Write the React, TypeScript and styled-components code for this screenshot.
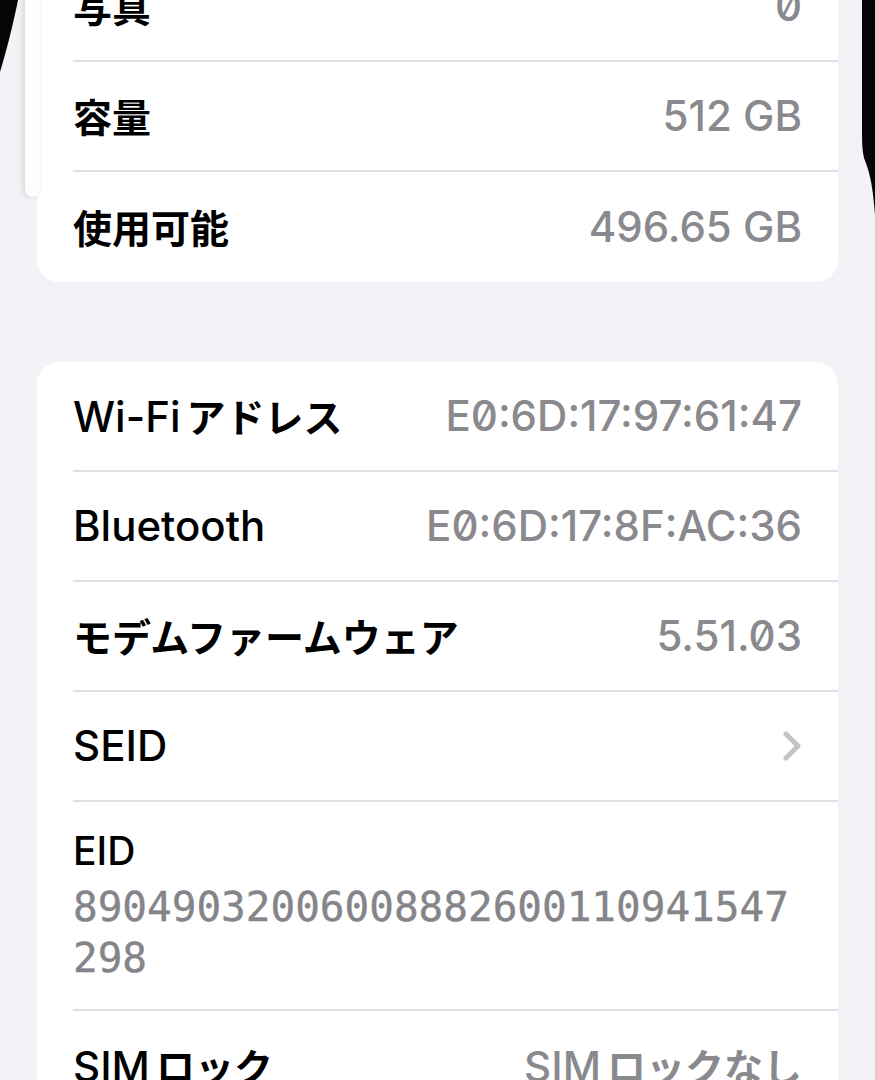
import React from "react";
import styled, { createGlobalStyle } from "styled-components";

const GlobalStyle = createGlobalStyle`
  html, body {
    margin: 0;
    padding: 0;
    background: #f2f2f7;
  }
  body {
    font-family: Inter, "Noto Sans CJK JP", sans-serif;
    -webkit-font-smoothing: antialiased;
    overflow: hidden;
  }
`;

type Item = { label: React.ReactNode; value?: React.ReactNode; chevron?: boolean };

const JaText = styled.span<{ $after?: boolean }>`
  font-family: "Noto Sans CJK JP", sans-serif;
  font-size: 39px;
  font-weight: 600;
  margin-left: ${(p) => (p.$after ? "6px" : "0")};
`;

const Ja = ({ children, after }: { children: React.ReactNode; after?: boolean }) => (
  <JaText $after={after}>{children}</JaText>
);

const storage: Item[] = [
  { label: <Ja>写真</Ja>, value: "0" },
  { label: <Ja>容量</Ja>, value: "512 GB" },
  { label: <Ja>使用可能</Ja>, value: "496.65 GB" },
];

const Screen = styled.div`
  position: relative;
  width: 876px;
  height: 1080px;
  overflow: hidden;
  box-sizing: border-box;
  background: #f2f2f7;
  border-right: 1px solid #cfcfd4;
`;

// scrolled content: the first row is partly above the top edge
const Content = styled.div`
  display: flex;
  flex-direction: column;
  gap: 80px;
  padding: 0 37px;
  margin-top: -48px;
`;

const Card = styled.div`
  background: #ffffff;
  border-radius: 22px;
  overflow: hidden;
`;

const Row = styled.div`
  padding-left: 36px;
  &:last-child > div {
    border-bottom: none;
  }
`;

const RowInner = styled.div`
  display: flex;
  align-items: center;
  justify-content: space-between;
  height: 110px;
  box-sizing: border-box;
  padding-right: 36px;
  border-bottom: 2px solid #e0e0e4;
`;

const StackedInner = styled(RowInner)`
  height: auto;
  flex-direction: column;
  align-items: flex-start;
  justify-content: flex-start;
  padding-top: 24px;
  padding-bottom: 25px;
`;

const Label = styled.div`
  font-size: 42px;
  font-weight: 500;
  line-height: 50px;
  color: #000000;
  white-space: nowrap;
`;

const SmallLabel = styled(Label)`
  font-size: 39px;
`;

const Value = styled.div`
  font-size: 42px;
  font-weight: 500;
  line-height: 50px;
  color: #8a8a8e;
  white-space: nowrap;
  font-feature-settings: "zero" 1;
`;

const MonoValue = styled.div`
  width: 100%;
  margin-top: 6px;
  font-family: "DejaVu Sans Mono", monospace;
  font-size: 41px;
  line-height: 51px;
  color: #858589;
  word-break: break-all;
  -webkit-text-stroke: 0.4px #858589;
`;

const Chevron = () => (
  <svg width="20" height="30" viewBox="0 0 20 30">
    <polyline points="4,3 16,15 4,27" fill="none" stroke="#c4c4c8" strokeWidth="5" strokeLinecap="round" strokeLinejoin="round" />
  </svg>
);

const ScrollIndicator = styled.div`
  position: absolute;
  left: 25px;
  top: -20px;
  width: 15px;
  height: 217px;
  border-radius: 8px;
  background: #fdfdfe;
  box-shadow: -2px 0 6px rgba(0, 0, 0, 0.12);
`;

const EdgeShade = styled.svg`
  position: absolute;
  top: 0;
  pointer-events: none;
`;

const InfoRow = ({ label, value, chevron }: Item) => (
  <Row>
    <RowInner>
      <Label>{label}</Label>
      {chevron ? <Chevron /> : <Value>{value}</Value>}
    </RowInner>
  </Row>
);

export default function App() {
  return (
    <>
      <GlobalStyle />
      <Screen>
        <Content>
          <Card>
            {storage.map((it, i) => (
              <InfoRow key={i} {...it} />
            ))}
          </Card>
          <Card>
            <InfoRow label={<>Wi-Fi<Ja after>アドレス</Ja></>} value="E0:6D:17:97:61:47" />
            <InfoRow label="Bluetooth" value="E0:6D:17:8F:AC:36" />
            <InfoRow label={<Ja>モデムファームウェア</Ja>} value="5.51.03" />
            <InfoRow label="SEID" chevron />
            <Row>
              <StackedInner>
                <SmallLabel>EID</SmallLabel>
                <MonoValue>89049032006008882600110941547298</MonoValue>
              </StackedInner>
            </Row>
            <InfoRow label={<>SIM<Ja after>ロック</Ja></>} value={<>SIM<Ja after>ロックなし</Ja></>} />
          </Card>
        </Content>
        <ScrollIndicator />
        <EdgeShade width="30" height="120" style={{ left: 0 }}>
          <path d="M0 0 H18 C14 20 8 45 0 72 Z" fill="#050505" />
        </EdgeShade>
        <EdgeShade width="14" height="230" style={{ right: 0 }}>
          <path d="M1 0 H14 V215 C12 190 10 175 3 158 C1 150 1 140 1 130 Z" fill="#050505" />
        </EdgeShade>
      </Screen>
    </>
  );
}
